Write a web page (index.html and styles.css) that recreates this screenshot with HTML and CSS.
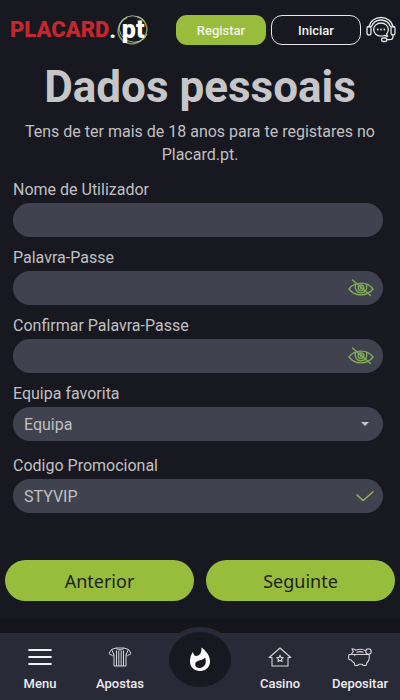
FILE: index.html
```html
<!DOCTYPE html>
<html lang="pt">
<head>
<meta charset="utf-8">
<meta name="viewport" content="width=device-width, initial-scale=1">
<title>Placard.pt - Dados pessoais</title>
<link rel="stylesheet" href="styles.css">
</head>
<body>
<header class="topbar">
  <a class="logo" href="#" aria-label="Placard.pt">
    <span class="logo-name">PLACARD</span><span class="logo-dot">.</span>
    <span class="logo-badge">
      <svg class="logo-ring" viewBox="0 0 34 32" aria-hidden="true">
        <g fill="none">
          <ellipse cx="16.500" cy="16" rx="14.500" ry="13.500" stroke="#7d9c53" stroke-width="1.600" stroke-dasharray="66 10" transform="rotate(-25 16.500 16)"/>
          <ellipse cx="17.500" cy="15" rx="14.500" ry="13" stroke="#c9d3bd" stroke-width=".7" stroke-dasharray="72 14" transform="rotate(20 17.500 15)"/>
        </g>
      </svg>
      <span class="logo-pt">pt</span>
    </span>
  </a>
  <div class="account">
    <button class="pill pill-solid" type="button">Registar</button>
    <button class="pill pill-outline" type="button">Iniciar</button>
    <button class="support" type="button" aria-label="Apoio">
      <svg viewBox="0 0 30 28" fill="none" stroke="#e6e6e6" stroke-width="1.300" stroke-linecap="round" stroke-linejoin="round">
        <path d="M3 11C4 5 9 1.500 15 1.500S26 5 27 11M5.500 10.500C7 6.500 10.500 4 15 4s8 2.500 9.500 6.500"/>
        <rect x="1" y="10.500" width="4" height="8.500" rx="1.800"/>
        <rect x="25" y="10.500" width="4" height="8.500" rx="1.800"/>
        <path d="M15 7c4.200 0 7.300 2.800 7.300 6.600 0 1.900-.7 3.300-1.700 4.400l1 2.300-3.300-.8c-1 .5-2.100.7-3.300.7-4.200 0-7.300-2.800-7.300-6.600S10.800 7 15 7z"/>
        <path d="M27 19v1.500c0 2-1.300 3.200-3.200 3.200h-3"/>
        <rect x="15.500" y="22" width="5.500" height="3.500" rx="1.700"/>
        <path stroke-width="1.800" d="M11.700 13.500h.01M15 13.500h.01M18.300 13.500h.01"/>
      </svg>
    </button>
  </div>
</header>

<main>
  <h1>Dados pessoais</h1>
  <p class="notice">Tens de ter mais de 18 anos para te registares no Placard.pt.</p>
  <form class="form">
    <div class="field">
      <label for="user">Nome de Utilizador</label>
      <div class="control"><input id="user" type="text"></div>
    </div>
    <div class="field">
      <label for="pass">Palavra-Passe</label>
      <div class="control">
        <input id="pass" type="password">
        <button class="reveal" type="button" aria-label="Mostrar palavra-passe">
          <svg viewBox="0 0 26 18"><use href="#eye"/></svg>
        </button>
      </div>
    </div>
    <div class="field">
      <label for="confirm">Confirmar Palavra-Passe</label>
      <div class="control">
        <input id="confirm" type="password">
        <button class="reveal" type="button" aria-label="Mostrar confirmação">
          <svg viewBox="0 0 26 18"><use href="#eye"/></svg>
        </button>
      </div>
    </div>
    <div class="field">
      <label for="team">Equipa favorita</label>
      <div class="control">
        <select id="team"><option>Equipa</option></select>
        <svg class="caret" viewBox="0 0 8 4" aria-hidden="true"><path d="M0 0h8L4 4z" fill="#c4c5c8"/></svg>
      </div>
    </div>
    <div class="field field-promo">
      <label for="promo">Codigo Promocional</label>
      <div class="control">
        <input id="promo" type="text" value="STYVIP">
        <svg class="tick" viewBox="0 0 18 12" aria-hidden="true"><path d="M.5 4.500L7 10.500l10.500-9" fill="none" stroke="#90b756" stroke-width="1.400"/></svg>
      </div>
    </div>
    <div class="actions">
      <button class="step" type="button">Anterior</button>
      <button class="step" type="submit">Seguinte</button>
    </div>
  </form>
</main>

<nav class="tabs">
  <a class="tab" href="#">
    <svg viewBox="0 0 24 20" stroke="#f3f0f5" stroke-width="2.200" stroke-linecap="round"><path d="M1.200 3h21.600M1.200 10h21.600M1.200 17h21.600"/></svg>
    Menu
  </a>
  <a class="tab" href="#">
    <svg viewBox="0 0 24 20" fill="none" stroke="#d5d5da" stroke-width="1" stroke-linejoin="round">
      <path d="M8 1L3.500 2.500 1 6.500l3.500 2.200L6 7.500V19h12V7.500l1.500 1.200L23 6.500l-2.500-4L16 1c-1 2.400-7 2.400-8 0z"/>
      <path d="M3.500 2.500L6 7.500M20.500 2.500L18 7.500M8.500 3.500V19M10.800 3.500V19M13.200 3.500V19M15.500 3.500V19M8 1h8"/>
    </svg>
    Apostas
  </a>
  <a class="hot" href="#" aria-label="Destaques">
    <svg viewBox="0 0 22 25" aria-hidden="true">
      <path fill="#fff" fill-rule="evenodd" d="M12.500.5C17 4 21 8.500 21 14.500c0 5.500-4.300 9.500-10 9.500S1 20 1 14.500C1 11 2 7.500 4 4.800c.2 2.400 1.300 4.200 3.300 4.200 3.800 0 5.600-4 5.200-8.500zM16 10.500c-2 2.600-4.300 2.300-6.600 3.200-2.300.8-3.200 2-3.200 3.700 0 2.200 1.700 3.600 4.100 3.600 4 0 6.500-3 6.500-6.500 0-1.500-.2-2.900-.8-4z"/>
    </svg>
  </a>
  <a class="tab" href="#">
    <svg viewBox="0 0 24 20" fill="none" stroke="#d5d5da" stroke-width="1.100" stroke-linejoin="round">
      <path d="M4 10.500H1.200L12 1l10.800 9.500H20V19H4z"/>
      <path d="M12 8.300l1 2.100 2.300.3-1.700 1.500.4 2.300-2-1.100-2 1.100.4-2.300-1.700-1.500 2.300-.3z"/>
    </svg>
    Casino
  </a>
  <a class="tab" href="#">
    <svg viewBox="0 0 24 20" fill="none" stroke="#d5d5da" stroke-width="1.100" stroke-linejoin="round" stroke-linecap="round">
      <path d="M3.300 7.500C4 6 4.800 5.200 5.300 4.700L4 1.800c1.800 0 3 .5 3.700 1.400C11 2 15 2 17.500 3.800M21 7.500c1 4 0 6.500-2.200 8.500L18 18.500h-3l-.5-1.300h-4L10 18.500H7L6.300 16C4.800 15.200 3.700 14 3 12.800H1.200c-.8-1.500-.8-3.700 0-5.300z"/>
      <circle cx="20.500" cy="4.500" r="2.700"/>
      <path d="M9 5.200c2-.8 4-.8 6 0M6.800 8.300v.4"/>
    </svg>
    Depositar
  </a>
</nav>

<svg class="sprite" aria-hidden="true">
  <symbol id="eye" viewBox="0 0 26 18">
    <g fill="none" stroke="#83ad5a" stroke-width="1.300" stroke-linecap="round">
      <path d="M1 10C4 6 8 4.200 13 4.200S22 6 25 10c-3 4-7 5.800-12 5.800S4 14 1 10z"/>
      <path d="M7.500 5.500C6.500 10 8.500 13.800 13 13.800s6.500-3.800 5.500-8.300"/>
      <circle cx="13" cy="8.800" r="2.800"/>
      <circle cx="13" cy="8.800" r=".7"/>
      <path d="M4.500 1l18 15.500"/>
    </g>
  </symbol>
</svg>
</body>
</html>
```
FILE: styles.css
```css
* { box-sizing: border-box; }

body {
  margin: 0;
  min-height: 100vh;
  display: flex;
  flex-direction: column;
  background: #181820;
  color: #c0c0c3;
  font-family: Roboto, "Liberation Sans", sans-serif;
  font-size: 16px;
}

button, input, select { font: inherit; color: inherit; border: 0; margin: 0; padding: 0; }
button { background: none; }
a { color: inherit; text-decoration: none; }
svg { display: block; }
.sprite { position: absolute; width: 0; height: 0; }

.topbar {
  display: flex;
  align-items: center;
  justify-content: space-between;
  height: 60px;
  padding: 0 4px 0 10px;
}

.logo { display: flex; align-items: center; }
.logo-name {
  color: #c6262d;
  font: 900 22px/32px Roboto, sans-serif;
}
.logo-dot { color: #fff; font: bold 24px/32px Roboto, sans-serif; }
.logo-badge { display: grid; place-items: center; width: 34px; height: 32px; }
.logo-badge > * { grid-area: 1 / 1; }
.logo-ring { width: 34px; height: 32px; }
.logo-pt { color: #fff; font: 900 25px/28px Roboto, sans-serif; }

.account { display: flex; align-items: center; gap: 5px; }
.pill {
  width: 90px;
  height: 30px;
  border-radius: 11px;
  font-size: 13px;
  font-weight: 500;
  color: #f1f3ea;
}
.pill-solid { background: #98bd3d; }
.pill-outline { border: 1px solid #e6e6e6; }
.support svg { width: 30px; height: 28px; }

h1 {
  margin: 0;
  color: #c6c6c8;
  font-size: 44px;
  line-height: 54px;
  font-weight: 700;
  text-align: center;
}
.notice {
  margin: 6px 16px 14px;
  line-height: 23px;
  text-align: center;
}

.field { margin: 0 17px 11px 13px; }
.field label { display: block; line-height: 20px; margin-bottom: 3px; }
.field-promo { margin-top: 15px; }
.control {
  display: flex;
  align-items: center;
  height: 34px;
  padding: 0 9px 0 11px;
  border-radius: 17px;
  background: #40434f;
}
.control input, .control select {
  flex: 1;
  min-width: 0;
  height: 34px;
  background: none;
  appearance: none;
  outline: 0;
}
.reveal svg { width: 26px; height: 18px; }
.caret { width: 8px; height: 4px; margin-right: 5px; }
.tick { width: 18px; height: 12px; }

.actions {
  display: flex;
  gap: 12px;
  margin-top: 47px;
  padding: 0 5px;
}
.step {
  flex: 1;
  height: 41px;
  border-radius: 21px;
  background: #98bd3d;
  color: #1c211c;
  font: 18px/24px "Noto Sans", sans-serif;
}

.tabs {
  display: grid;
  grid-template-columns: repeat(5, 1fr);
  height: 67px;
  margin-top: auto;
  background: #292a37;
  box-shadow: 0 -15px 0 #15151b;
}
.tab {
  display: flex;
  flex-direction: column;
  align-items: center;
  gap: 8px;
  padding-top: 14px;
  color: #ececf0;
  font-size: 13px;
  line-height: 18px;
  font-weight: 500;
}
.tab svg { width: 24px; height: 20px; }
.hot {
  display: grid;
  place-items: center;
  justify-self: center;
  width: 72px;
  height: 65px;
  margin-top: -6px;
  border: 5px solid #292a37;
  border-radius: 50%;
  background: #181820;
}
.hot svg { width: 22px; height: 25px; }
```
